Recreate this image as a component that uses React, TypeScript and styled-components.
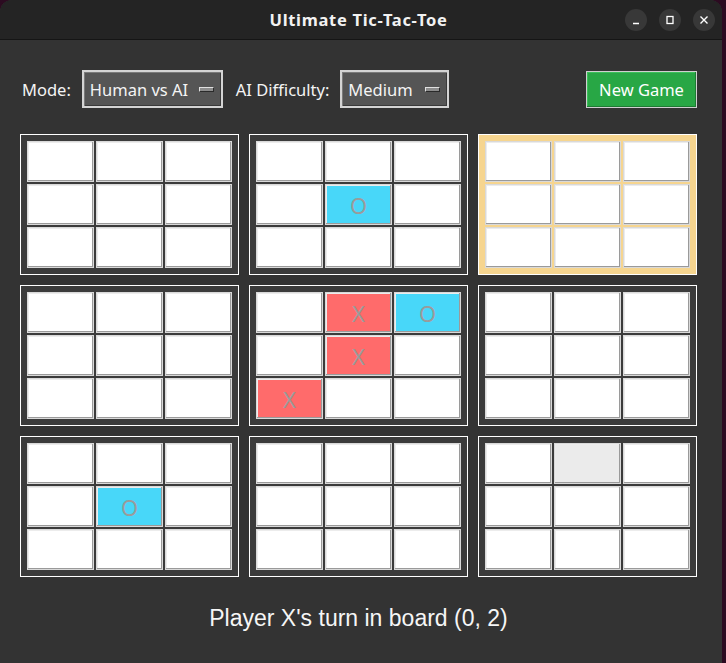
import React from "react";
import styled, { createGlobalStyle } from "styled-components";

const GlobalStyle = createGlobalStyle`
  html, body {
    margin: 0;
    padding: 0;
    background: #2c0b21;
    overflow: hidden;
  }
`;

const Window = styled.div`
  width: 722px;
  height: 663px;
  background: #333333;
  border-radius: 12px 12px 0 0;
  overflow: hidden;
  display: flex;
  flex-direction: column;
`;

const TitleBar = styled.div`
  height: 39px;
  flex-shrink: 0;
  background: #242424;
  border-bottom: 1px solid #151515;
  display: flex;
  align-items: center;
  justify-content: center;
  position: relative;
`;

const Title = styled.span`
  font-family: "Noto Sans", "DejaVu Sans", sans-serif;
  font-weight: 700;
  font-size: 16.5px;
  letter-spacing: 0.7px;
  color: #f2f2f2;
  margin-right: 5px;
`;

const WindowButtons = styled.div`
  position: absolute;
  right: 7px;
  top: 9px;
  display: flex;
  gap: 12px;
`;

const WinButton = styled.div`
  width: 22px;
  height: 22px;
  border-radius: 50%;
  background: #383838;
  display: flex;
  align-items: center;
  justify-content: center;
`;

const Body = styled.div`
  padding: 30px 0 0 20px;
  display: flex;
  flex-direction: column;
`;

const Controls = styled.div`
  display: flex;
  align-items: center;
  height: 38px;
  width: 677px;
  padding-left: 2px;
  box-sizing: border-box;
`;

const Label = styled.span`
  flex-shrink: 0;
  font-family: "Noto Sans", "DejaVu Sans", sans-serif;
  font-size: 16.5px;
  color: #f4f4f4;
  margin-right: 11px;
`;

const Select = styled.div<{ $width: number }>`
  flex-shrink: 0;
  width: ${(p) => p.$width}px;
  height: 38px;
  box-sizing: border-box;
  background: #555555;
  border: 2px solid #d4d4d4;
  box-shadow: inset 1px 1px 0 #7a7a7a, inset -1px -1px 0 #3a3a3a;
  display: flex;
  align-items: center;
  justify-content: space-between;
  padding: 0 7px 0 6px;
  margin-right: 13px;
  font-family: "Noto Sans", "DejaVu Sans", sans-serif;
  font-size: 16.5px;
  color: #f4f4f4;
`;

const Indicator = styled.span`
  width: 15px;
  height: 5px;
  box-sizing: border-box;
  background: #8c8c8c;
  border-top: 1px solid #e0e0e0;
  border-left: 1px solid #e0e0e0;
  border-bottom: 1px solid #2a2a2a;
  border-right: 1px solid #2a2a2a;
`;

const NewGameButton = styled.button`
  flex-shrink: 0;
  margin-left: auto;
  width: 111px;
  height: 37px;
  background: #28a745;
  border: 1px solid #d0d0d0;
  box-shadow: inset -1px -1px 0 #1d7a33, inset 1px 1px 0 #3cbf5a;
  font-family: "Noto Sans", "DejaVu Sans", sans-serif;
  font-size: 16.5px;
  color: #ffffff;
  padding: 0;
`;

const BigGrid = styled.div`
  margin-top: 26px;
  display: grid;
  grid-template-columns: repeat(3, 219px);
  grid-auto-rows: 141px;
  gap: 10px;
`;

const Board = styled.div<{ $active: boolean }>`
  box-sizing: border-box;
  border: 1px solid #ffffff;
  background: ${(p) => (p.$active ? "#f6d58f" : "#3b3b3b")};
  padding: 6px;
  display: grid;
  grid-template-columns: repeat(3, 67px);
  grid-auto-rows: 41px;
  gap: 2px;
`;

const cellColors: Record<string, string> = {
  X: "#ff6b6b",
  O: "#48d7f9",
  "": "#ffffff",
  hover: "#ebebeb",
};

const Cell = styled.div<{ $kind: string }>`
  box-sizing: border-box;
  border: 1px solid #d9d9d9;
  background: ${(p) => cellColors[p.$kind]};
  box-shadow: inset -1px -1px 0 #9a9a9a, inset 1px 1px 0 #ececec;
  display: flex;
  align-items: center;
  justify-content: center;
  font-family: "Noto Sans", "DejaVu Sans", sans-serif;
  font-size: 22px;
  color: #9b9b9b;
`;

const Status = styled.div`
  margin-top: 26px;
  width: 677px;
  text-align: center;
  font-family: "Liberation Sans", Arial, sans-serif;
  font-size: 23px;
  line-height: 30px;
  color: #f6f6f6;
`;

type Mark = "X" | "O" | "";

const empty = (): Mark[] => ["", "", "", "", "", "", "", "", ""];

const boards: Mark[][] = Array.from({ length: 9 }, empty);
boards[1][4] = "O";
boards[4][1] = "X";
boards[4][2] = "O";
boards[4][4] = "X";
boards[4][6] = "X";
boards[6][4] = "O";

const activeBoard = 2;
const hovered = { board: 8, cell: 1 };

export default function App() {
  return (
    <>
      <GlobalStyle />
      <Window>
        <TitleBar>
          <Title>Ultimate Tic-Tac-Toe</Title>
          <WindowButtons>
            <WinButton>
              <svg width="10" height="10" viewBox="0 0 10 10">
                <path d="M2 8.5h6" stroke="#fff" strokeWidth="1.3" />
              </svg>
            </WinButton>
            <WinButton>
              <svg width="10" height="10" viewBox="0 0 10 10">
                <rect x="2" y="1.5" width="6" height="7" fill="none" stroke="#fff" strokeWidth="1.3" />
              </svg>
            </WinButton>
            <WinButton>
              <svg width="10" height="10" viewBox="0 0 10 10">
                <path d="M1.5 1.5l7 7M8.5 1.5l-7 7" stroke="#fff" strokeWidth="1.4" />
              </svg>
            </WinButton>
          </WindowButtons>
        </TitleBar>
        <Body>
          <Controls>
            <Label>Mode:</Label>
            <Select $width={141}>
              Human vs AI
              <Indicator />
            </Select>
            <Label>AI Difficulty:</Label>
            <Select $width={109}>
              Medium
              <Indicator />
            </Select>
            <NewGameButton>New Game</NewGameButton>
          </Controls>
          <BigGrid>
            {boards.map((cells, b) => (
              <Board key={b} $active={b === activeBoard}>
                {cells.map((mark, c) => (
                  <Cell
                    key={c}
                    $kind={
                      mark === "" && hovered.board === b && hovered.cell === c
                        ? "hover"
                        : mark
                    }
                  >
                    {mark}
                  </Cell>
                ))}
              </Board>
            ))}
          </BigGrid>
          <Status>Player X's turn in board (0, 2)</Status>
        </Body>
      </Window>
    </>
  );
}
